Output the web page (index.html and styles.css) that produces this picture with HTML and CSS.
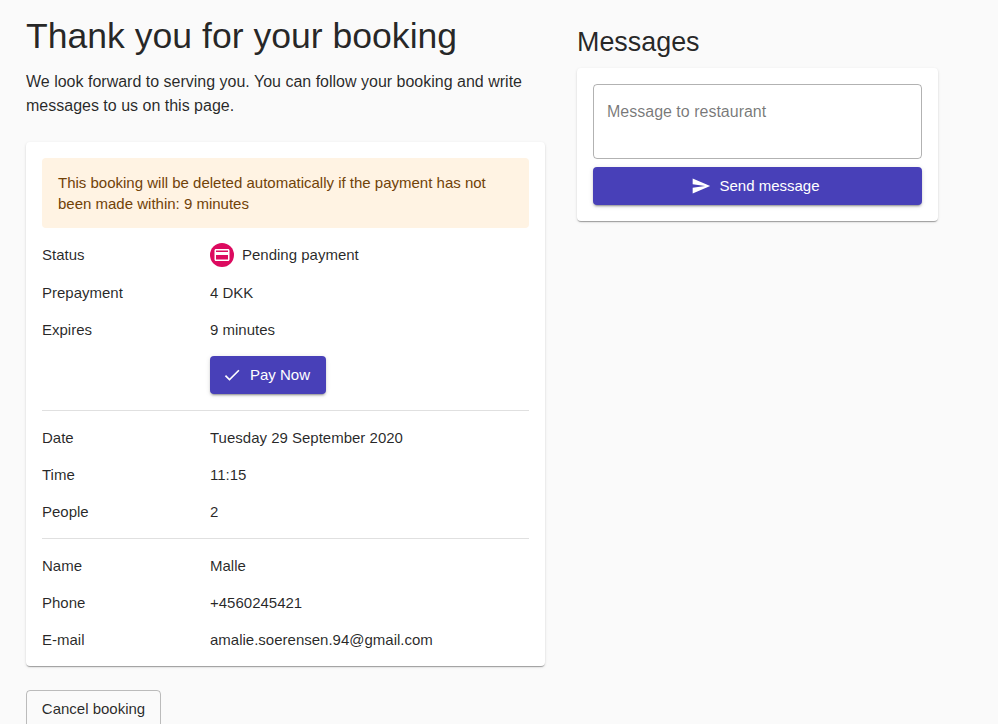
FILE: index.html
```html
<!DOCTYPE html>
<html lang="en">
<head>
<meta charset="utf-8">
<title>Booking</title>
<link rel="stylesheet" href="styles.css">
</head>
<body>
<div class="page">
  <main class="main">
    <h1 class="title">Thank you for your booking</h1>
    <p class="lead">We look forward to serving you. You can follow your booking and write messages to us on this page.</p>
    <section class="card booking">
      <div class="alert">This booking will be deleted automatically if the payment has not been made within: 9 minutes</div>
      <div class="group group-first">
        <div class="row row-status"><span class="label">Status</span><span class="value status"><span class="status-dot"><svg viewBox="0 0 24 24" width="18" height="18"><path fill="#fff" d="M20 4H4c-1.11 0-1.99.89-1.99 2L2 18c0 1.11.89 2 2 2h16c1.11 0 2-.89 2-2V6c0-1.11-.89-2-2-2zm0 14H4v-6h16v6zm0-10H4V6h16v2z"/></svg></span>Pending payment</span></div>
        <div class="row"><span class="label">Prepayment</span><span class="value">4 DKK</span></div>
        <div class="row"><span class="label">Expires</span><span class="value">9 minutes</span></div>
        <div class="pay-row"><button class="btn btn-primary btn-pay"><svg class="btn-icon" viewBox="0 0 24 24" width="20" height="20"><path fill="#fff" d="M9 16.17L4.83 12l-1.42 1.41L9 19 21 7l-1.41-1.41z"/></svg>Pay Now</button></div>
      </div>
      <hr class="divider">
      <div class="group group-mid">
        <div class="row"><span class="label">Date</span><span class="value">Tuesday 29 September 2020</span></div>
        <div class="row"><span class="label">Time</span><span class="value">11:15</span></div>
        <div class="row"><span class="label">People</span><span class="value">2</span></div>
      </div>
      <hr class="divider">
      <div class="group">
        <div class="row"><span class="label">Name</span><span class="value">Malle</span></div>
        <div class="row"><span class="label">Phone</span><span class="value">+4560245421</span></div>
        <div class="row"><span class="label">E-mail</span><span class="value">amalie.soerensen.94@gmail.com</span></div>
      </div>
    </section>
    <button class="btn btn-outline">Cancel booking</button>
  </main>
  <aside class="side">
    <h2 class="side-title">Messages</h2>
    <section class="card messages">
      <div class="textarea">Message to restaurant</div>
      <button class="btn btn-primary btn-send"><svg class="btn-icon" viewBox="0 0 24 24" width="20" height="20"><path fill="#fff" d="M2.01 21L23 12 2.01 3 2 10l15 2-15 2z"/></svg>Send message</button>
    </section>
  </aside>
</div>
</body>
</html>
```
FILE: styles.css
```css
* { box-sizing: border-box; }
html, body { margin: 0; height: 724px; overflow: hidden; }
body { background: #fafafa; color: rgba(0,0,0,.85); font-family: "Liberation Sans", Arial, sans-serif; font-size: 15px; }
.page { display: flex; align-items: flex-start; padding: 0 0 0 26px; gap: 32px; }
.main { width: 519px; flex: none; }
.side { width: 361px; flex: none; padding-top: 26px; }
.title { margin: 14px 0 0; font-size: 35.6px; font-weight: 400; line-height: 44px; }
.lead { margin: 12px 0 0; font-size: 16px; line-height: 24px; }
.card { background: #fff; border-radius: 4px; box-shadow: 0 2px 1px -1px rgba(0,0,0,.2), 0 1px 1px 0 rgba(0,0,0,.14), 0 1px 3px 0 rgba(0,0,0,.12); padding: 16px; }
.booking { margin-top: 24px; padding-bottom: 8px; }
.alert { background: #fff3e3; color: #714208; border-radius: 4px; padding: 14px 16px; line-height: 21px; }
.group { padding-top: 8px; }
.group-mid { padding-bottom: 8px; }
.row { display: flex; align-items: center; min-height: 37px; }
.row-status { min-height: 38px; padding-bottom: 1px; }
.label { width: 168px; flex: none; }
.status { display: flex; align-items: center; gap: 8px; }
.status-dot { width: 24px; height: 24px; border-radius: 50%; background: #dc0a5f; display: flex; align-items: center; justify-content: center; }
.pay-row { padding: 8px 0 16px 168px; }
.btn { font-family: inherit; font-size: 15px; line-height: 18px; white-space: nowrap; border-radius: 4px; display: inline-flex; align-items: center; justify-content: center; cursor: pointer; }
.btn-primary { background: #4840b8; color: #fff; border: 0; padding: 0 16px 1px; box-shadow: 0 3px 1px -2px rgba(0,0,0,.2), 0 2px 2px 0 rgba(0,0,0,.14), 0 1px 5px 0 rgba(0,0,0,.12); }
.btn-icon { margin: 0 8px 0 -4px; flex: none; }
.btn-pay { height: 38px; width: 116px; }
.divider { border: 0; border-top: 1px solid rgba(0,0,0,.12); margin: 0; }
.btn-outline { margin-top: 24px; height: 38px; width: 135px; padding: 0 15px; background: transparent; color: rgba(0,0,0,.85); border: 1px solid rgba(0,0,0,.25); }
.side-title { margin: 0; font-size: 26.9px; font-weight: 400; line-height: 32px; }
.messages { margin-top: 10px; }
.textarea { height: 75px; border: 1px solid rgba(0,0,0,.3); border-radius: 4px; padding: 17px 13px; font-size: 16px; line-height: 19px; color: rgba(0,0,0,.54); }
.btn-send { width: 100%; height: 38px; margin-top: 8px; }
```
